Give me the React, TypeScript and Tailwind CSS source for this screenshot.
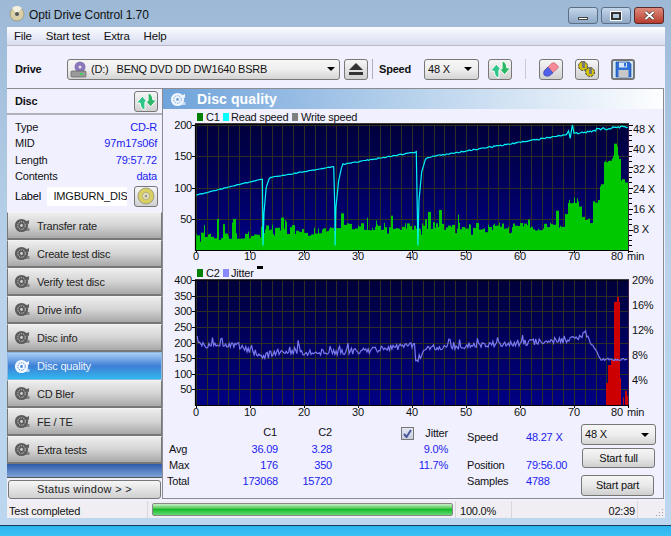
import React from "react";

const FONT = '"Liberation Sans", Arial, sans-serif';

function rng(seed: number) {
  let s = seed;
  return () => {
    s = (s * 16807) % 2147483647;
    return s / 2147483647;
  };
}

const X0 = 196;
const PX = 5.4;
const x = (m: number) => X0 + m * PX;
const GRID = "#2e2e26";

function Arrows({ size = 21 }: { size?: number }) {
  return (
    <svg width={size} height={size} viewBox="0 0 20 20">
      <path d="M0.5 11.5 L6 5 L11 10.5 H8.5 V18 Q4.5 17.5 4 12 V11.5 Z" fill="#2fc48a" stroke="#fff" strokeWidth="0.9" />
      <path d="M19.5 8.5 L14 15 L9 9.5 H11.5 V2 Q15.5 2.5 16 8 V8.5 Z" fill="#2cb866" stroke="#fff" strokeWidth="0.9" />
    </svg>
  );
}

function DiscIcon({ color = "#5f5f5f", hole = "#d8d8d8" }: { color?: string; hole?: string }) {
  return (
    <svg width="17" height="17" viewBox="0 0 17 17">
      <circle cx="7.5" cy="8.5" r="6.6" fill={color} />
      <circle cx="7.5" cy="8.5" r="3.8" fill="none" stroke={hole} strokeWidth="1" strokeDasharray="1.4 1" />
      <circle cx="7.5" cy="8.5" r="1.4" fill={hole} />
      <path d="M11 5 L15 3 V7 Z" fill={color} />
      <path d="M12 11 h3.5 v3 h-3.5 z" fill={color} opacity="0.65" />
    </svg>
  );
}

function Chart1() {
  const r = rng(4711);
  const H = 126;
  const yv = (v: number) => 250 - (v / 200) * H + 0.5;
  const env = (m: number) => {
    if (m < 12) return 24;
    if (m < 26) return 31;
    if (m < 42) return 38;
    if (m < 68) return 38;
    if (m < 69) return 44 + (m - 68) * 35;
    if (m < 70.5) return 80;
    if (m < 72) return 80 - (m - 70.5) * 22;
    if (m < 73.5) return 46;
    if (m < 74.8) return 80;
    if (m < 75.4) return 95 + (m - 74.8) * 45;
    if (m < 77.4) return 145;
    if (m < 78) return 168;
    if (m < 78.7) return 150;
    return 108;
  };
  const bars: string[] = [];
  let v = 0;
  let hold = 0;
  for (let px = 0; px < 432; px++) {
    const m = px / PX;
    if (hold <= 0) {
      hold = 1 + Math.floor(r() * 3);
      v = env(m) + (r() - 0.5) * 12;
      if (m < 68 && r() > 0.85) v += 8 + 14 * r();
      if (m < 68 && r() > 0.85) v -= 12 * r();
      if (Math.abs(m - 3.8) < 0.15 || Math.abs(m - 6.9) < 0.15) v = 50;
    }
    hold--;
    bars.push(`M${X0 + px + 0.5} 250V${yv(Math.max(4, v)).toFixed(1)}`);
  }
  const speed: [number, number][] = [];
  const seg = (a: number, b: number, va: number, vb: number, n: number) => {
    for (let i = 0; i <= (b - a) * 4; i++) {
      const t = i / ((b - a) * 4);
      speed.push([a + (b - a) * t, va + (vb - va) * t + (r() - 0.5) * n]);
    }
  };
  seg(0, 12, 88, 113, 1.2);
  speed.push([12.3, 113], [12.4, 8], [12.6, 60], [13, 100], [13.5, 113]);
  seg(13.8, 25.4, 116, 133, 1.2);
  speed.push([25.5, 133], [25.7, 68], [25.75, 8], [25.9, 68], [26.4, 110], [26.9, 130]);
  seg(27.2, 40.6, 137, 156, 1.5);
  speed.push([40.8, 157], [40.95, 80], [41.1, 8], [41.3, 80], [41.8, 125], [42.5, 145]);
  seg(42.9, 68, 148, 183, 2);
  speed.push([68.6, 184], [69, 190], [69.3, 178], [69.7, 200], [70, 186]);
  seg(70.5, 74, 186, 190, 2.5);
  seg(74.2, 80, 192, 197, 4);
  const vLines: number[] = [];
  for (let m = 0; m <= 80; m += 2) vLines.push(m);
  const xTicks = [0, 10, 20, 30, 40, 50, 60, 70, 80];
  const left = [200, 150, 100, 50];
  const right = ["48 X", "40 X", "32 X", "24 X", "16 X", "8 X"];
  const rightTicks: number[] = [];
  for (let i = 0; i <= 24; i++) rightTicks.push(124.5 + i * 5.25);
  return (
    <g>
      <rect x={195} y={124} width={434} height={126} fill="url(#plot1)" />
      {vLines.map((m) => (
        <path key={m} d={`M${Math.round(x(m)) + 0.5} 124V250`} stroke={GRID} strokeWidth="1" />
      ))}
      {left.map((val) => (
        <path key={val} d={`M195 ${Math.round(yv(val)) + 0.5}H628`} stroke={GRID} strokeWidth="1" />
      ))}
      <path d={bars.join("")} stroke="#00c800" strokeWidth="1" fill="none" />
      <path
        d={"M" + speed.map(([a, b]) => `${x(a).toFixed(1)} ${yv(b).toFixed(1)}`).join("L")}
        stroke="#00f4f4"
        strokeWidth="1.2"
        fill="none"
      />
      <path d="M195.5 124V250.5H628.5" stroke="#000" fill="none" strokeWidth="1.2" />
      <path d="M195 124H629" stroke="#000" strokeWidth="1.4" />
      <path d="M628.5 124V250" stroke="#3b1a4a" strokeWidth="1" />
      {rightTicks.map((t, i) => (
        <path key={i} d={`M629 ${Math.round(t) + 0.5}h${i % 4 === 0 ? 4 : 3}`} stroke="#000" />
      ))}
      {xTicks.map((m) => (
        <path key={m} d={`M${Math.round(x(m)) + 0.5} 250v3`} stroke="#000" />
      ))}
      {left.map((val) => (
        <path key={val} d={`M192 ${Math.round(yv(val)) + 0.5}h3`} stroke="#000" />
      ))}
      {left.map((val) => (
        <text key={val} x={192} y={yv(val) + 4} textAnchor="end" fontSize="11" fill="#111">
          {val}
        </text>
      ))}
      {right.map((t, i) => (
        <text key={t} x={633} y={133 + i * 20} fontSize="11" fill="#111">
          {t}
        </text>
      ))}
      {xTicks.map((m) => (
        <text key={m} x={m === 80 ? x(m) - 11 : x(m)} y={260} textAnchor="middle" fontSize="11" fill="#111">
          {m}
        </text>
      ))}
      <text x={627} y={260} fontSize="11" fill="#111">
        min
      </text>
    </g>
  );
}

function Chart2() {
  const r = rng(9001);
  const yv = (v: number) => 405 - (v / 400) * 125;
  const pts: [number, number][] = [];
  const base = (m: number) => {
    if (m < 1) return 215 - m * 20;
    if (m < 8) return 192;
    if (m < 12.5) return 190 - (m - 8) * 8;
    if (m < 14) return 152 + (m - 12.5) * 9;
    if (m < 30) return 166 + (m - 14) * 0.4;
    if (m < 40.6) return 172 + (m - 30) * 1.8;
    if (m < 41.2) return 135;
    if (m < 43) return 150 + (m - 41.2) * 17;
    if (m < 70) return 182 + (m - 43) * 1;
    if (m < 72) return 209 + (m - 70) * 10;
    if (m < 75) return 228 - (m - 72) * 27;
    return 146;
  };
  for (let m = 0.2; m < 80; m += 0.22) {
    let val = base(m) + (r() - 0.5) * 20;
    if (m < 74 && r() > 0.92) val += 18;
    if (Math.abs(m - 18.9) < 0.12) val = 207;
    if (m > 73) val = base(m) + (r() - 0.5) * 7;
    pts.push([m, val]);
  }
  const red: [number, number][] = [
    [75.7, 0],
    [76.1, 70],
    [76.7, 128],
    [77.2, 144],
    [77.9, 330],
    [78.2, 346],
    [78.4, 330],
    [78.6, 85],
    [79, 0],
    [79.2, 25],
    [79.4, 0],
    [79.6, 45],
    [79.9, 30],
    [81, 0],
  ];
  const redBars: string[] = [];
  for (let px = 0; px < 26; px++) {
    const m = 75.7 + px / PX;
    let val = 0;
    for (let i = 0; i < red.length; i++)
      if (m <= red[i][0]) {
        val = red[i][1];
        break;
      }
    if (val > 0) redBars.push(`M${Math.round(x(m)) + 0.5} 405V${yv(val).toFixed(1)}`);
  }
  const vLines: number[] = [];
  for (let m = 0; m <= 80; m += 2) vLines.push(m);
  const hs = [50, 100, 150, 200, 250, 300, 350];
  const xTicks = [0, 10, 20, 30, 40, 50, 60, 70, 80];
  const labels = [400, 350, 300, 250, 200, 150, 100, 50];
  const right: [string, number][] = [
    ["20%", 284],
    ["16%", 309],
    ["12%", 334],
    ["8%", 359],
    ["4%", 384],
  ];
  return (
    <g>
      <rect x={195} y={280} width={434} height={125} fill="url(#plot1)" />
      {vLines.map((m) => (
        <path key={m} d={`M${Math.round(x(m)) + 0.5} 280V405`} stroke={GRID} />
      ))}
      {hs.map((val) => (
        <path key={val} d={`M195 ${Math.round(yv(val)) + 0.5}H628`} stroke={GRID} />
      ))}
      <path d={redBars.join("")} stroke="#cc0000" fill="none" />
      <path
        d={"M" + pts.map(([a, b]) => `${x(a).toFixed(1)} ${yv(b).toFixed(1)}`).join("L")}
        stroke="#7a7af0"
        strokeWidth="1.2"
        fill="none"
      />
      <path d="M195.5 280V405.5H628.5" stroke="#000" fill="none" strokeWidth="1.2" />
      <path d="M195 280H629" stroke="#000" strokeWidth="1.4" />
      <path d="M628.5 280V405" stroke="#3b1a4a" />
      {xTicks.map((m) => (
        <path key={m} d={`M${Math.round(x(m)) + 0.5} 405v3`} stroke="#000" />
      ))}
      {labels.map((val) => (
        <path key={val} d={`M192 ${Math.round(yv(val)) + 0.5}h3`} stroke="#000" />
      ))}
      {labels.map((val) => (
        <text key={val} x={192} y={yv(val) + 4} textAnchor="end" fontSize="11" fill="#111">
          {val}
        </text>
      ))}
      {right.map(([t, yy]) => (
        <text key={t} x={632} y={yy} fontSize="11" fill="#111">
          {t}
        </text>
      ))}
      {xTicks.map((m) => (
        <text key={m} x={m === 80 ? x(m) - 11 : x(m)} y={416} textAnchor="middle" fontSize="11" fill="#111">
          {m}
        </text>
      ))}
      <text x={627} y={416} fontSize="11" fill="#111">
        min
      </text>
    </g>
  );
}

function Charts() {
  return (
    <svg
      width={500}
      height={311}
      viewBox="163 109 500 311"
      className="block shrink-0"
      style={{ fontFamily: FONT, letterSpacing: "-0.2px" }}
    >
      <defs>
        <linearGradient id="plot1" x1="0" y1="0" x2="0" y2="1">
          <stop offset="0" stopColor="#00003a" />
          <stop offset="1" stopColor="#000084" />
        </linearGradient>
      </defs>
      <rect x={197} y={113} width={6} height={8} fill="#008000" />
      <text x={206} y={121} fontSize="11" fill="#111">C1</text>
      <rect x={223} y={113} width={6} height={8} fill="#00ffff" />
      <text x={231} y={121} fontSize="11" fill="#111">Read speed</text>
      <rect x={292} y={113} width={6} height={8} fill="#808080" />
      <text x={301} y={121} fontSize="11" fill="#111">Write speed</text>
      <Chart1 />
      <rect x={197} y={269} width={6} height={8} fill="#008000" />
      <text x={206} y={277} fontSize="11" fill="#111">C2</text>
      <rect x={223} y={269} width={6} height={8} fill="#8888ff" />
      <text x={231} y={277} fontSize="11" fill="#111">Jitter</text>
      <rect x={257} y={266} width={6} height={3} fill="#000" />
      <Chart2 />
    </svg>
  );
}

function NavBtn({ label, active }: { label: string; active?: boolean }) {
  return (
    <div
      className={
        active
          ? "h-[28px] flex items-center pl-[6px] border-y border-x border-[#8fb8e0] bg-gradient-to-b from-[#a9cdf4] via-[#3d7fd6] to-[#2fb8ee] text-[#eef4ff]"
          : "h-[28px] flex items-center pl-[6px] border-x border-x-[#777] border-t border-t-[#f4f4f4] border-b-2 border-b-[#777] bg-gradient-to-b from-[#eeeeee] via-[#d4d4d4] to-[#a8a8a8] text-[#222]"
      }
    >
      <DiscIcon color={active ? "#f4f8ff" : "#5c5c5c"} hole={active ? "#4c88d8" : "#d0d0d0"} />
      <span className={active ? "ml-[6px] text-[11px]" : "ml-[6px] pt-[1px] text-[11px]"}>{label}</span>
    </div>
  );
}

function Row({ k, v }: { k: string; v: string }) {
  return (
    <div className="h-[16.4px] flex items-center justify-between text-[11px]">
      <span className="text-[#111]">{k}</span>
      <span className="text-[#1c1cf0]">{v}</span>
    </div>
  );
}

function ToolBtn({ children, cls = "" }: { children: React.ReactNode; cls?: string }) {
  return (
    <div
      className={
        "w-[24px] h-[21px] shrink-0 rounded-[3px] border border-[#777] bg-gradient-to-b from-[#f6f6f6] to-[#d0d0d0] flex items-center justify-center " +
        cls
      }
    >
      {children}
    </div>
  );
}

function Combo({ w, text, cls = "" }: { w: string; text: string; cls?: string }) {
  return (
    <div
      className={
        w +
        " h-[21px] shrink-0 rounded-[3px] border border-[#777] bg-gradient-to-b from-[#f6f6f6] via-[#eeeeee] to-[#d4d4d4] flex items-center justify-between pl-[3px] pr-[6px] text-[11px] text-[#111] " +
        cls
      }
    >
      <span>{text}</span>
      <span className="w-0 h-0 border-x-[4px] border-x-transparent border-t-[4px] border-t-black" />
    </div>
  );
}

function Btn({ label, cls }: { label: string; cls: string }) {
  return (
    <div
      className={
        cls +
        " w-[73px] rounded-[3px] border border-[#777] bg-gradient-to-b from-[#f6f6f6] via-[#e8e8e8] to-[#cfcfcf] flex items-center justify-center text-[11px] text-[#111]"
      }
    >
      {label}
    </div>
  );
}

export default function App() {
  return (
    <div
      className="w-[671px] h-[536px] overflow-hidden flex flex-col text-[11px] tracking-[-0.2px]"
      style={{ fontFamily: FONT }}
    >
      <div className="h-[526px] shrink-0 flex flex-col bg-gradient-to-b from-[#9db9d6] via-[#b9d2ea] to-[#bcd6f0] border-b border-[#1a3a55]">
        {/* title */}
        <div className="h-[27px] flex items-center pl-[9px] pr-[7px] shrink-0">
          <svg width="16" height="16" viewBox="0 0 16 16">
            <circle cx="8" cy="8" r="7" fill="#d8cfa8" stroke="#8a8064" strokeWidth="0.6" />
            <path d="M8 8 L3 2 A7 7 0 0 1 13 2 Z" fill="#f4f0e0" />
            <circle cx="8" cy="8" r="2" fill="#555" />
          </svg>
          <span className="ml-[4px] pt-[2px] text-[12px] tracking-[-0.1px] text-[#111]">Opti Drive Control 1.70</span>
          <div className="ml-auto flex items-start gap-[3px] mt-[4px]">
            <div className="w-[30px] h-[17px] rounded-[3px] border border-[#5c6f85] bg-gradient-to-b from-[#c4d6ea] to-[#8fa9c6] flex items-end justify-center pb-[3px]">
              <div className="w-[10px] h-[3px] bg-white border border-[#444]" />
            </div>
            <div className="w-[30px] h-[17px] rounded-[3px] border border-[#5c6f85] bg-gradient-to-b from-[#c4d6ea] to-[#8fa9c6] flex items-center justify-center">
              <div className="w-[10px] h-[8px] bg-[#b8cce0] border-2 border-[#333] outline outline-1 outline-white" />
            </div>
            <div className="w-[30px] h-[17px] rounded-[3px] border border-[#5a2a2a] bg-gradient-to-b from-[#dc8a7c] to-[#b83a2c] flex items-center justify-center">
              <svg width="11" height="9" viewBox="0 0 11 9">
                <path d="M1.5 1 L9.5 8 M9.5 1 L1.5 8" stroke="#333" strokeWidth="3.2" />
                <path d="M1.5 1 L9.5 8 M9.5 1 L1.5 8" stroke="#fff" strokeWidth="2" />
              </svg>
            </div>
          </div>
        </div>

        {/* window body */}
        <div className="flex-1 ml-[7px] mr-[6px] flex flex-col min-h-0 bg-[#f0f0ff]">
          <div className="h-[19px] shrink-0 flex items-center gap-[14px] pl-[7px] pt-[2px] bg-gradient-to-b from-[#fbfcff] via-[#e9ecf8] to-[#d8dcee] border-b border-[#b8bcc8] text-[11.5px] text-[#111]">
            <span>File</span>
            <span>Start test</span>
            <span>Extra</span>
            <span>Help</span>
          </div>

          {/* toolbar */}
          <div className="h-[42px] shrink-0 flex items-center pt-[4px]">
            <span className="ml-[8px] w-[27px] font-bold text-[11px] text-[#111]">Drive</span>
            <div className="ml-[25px] w-[273px] h-[21px] shrink-0 rounded-[3px] border border-[#777] bg-gradient-to-b from-[#f6f6f6] via-[#eeeeee] to-[#d4d4d4] flex items-center pl-[2px] pr-[4px]">
              <svg width="18" height="17" viewBox="0 0 18 17">
                <circle cx="10" cy="6" r="5.5" fill="#8a78b8" />
                <circle cx="10" cy="6" r="1.5" fill="#e8e0f4" />
                <rect x="1" y="10" width="15" height="6" rx="1" fill="#9a9a9a" stroke="#555" strokeWidth="0.6" />
                <rect x="10" y="12" width="3" height="2" fill="#3fd060" />
              </svg>
              <span className="ml-[3px] text-[11px] text-[#111]">(D:)</span>
              <span className="ml-[8px] text-[11px] text-[#111]">BENQ DVD DD DW1640 BSRB</span>
              <span className="ml-auto w-0 h-0 border-x-[4px] border-x-transparent border-t-[4px] border-t-black" />
            </div>
            <ToolBtn cls="ml-[4px]">
              <svg width="16" height="14" viewBox="0 0 16 14">
                <path d="M8 1 L15 8 H1 Z" fill="#333" />
                <rect x="1" y="10" width="14" height="3" fill="#333" />
              </svg>
            </ToolBtn>
            <div className="ml-[4px] w-px h-[20px] bg-[#b0b0b8]" />
            <span className="ml-[6px] w-[31px] font-bold text-[11px] text-[#111]">Speed</span>
            <Combo w="w-[55px] ml-[14px]" text="48 X" />
            <ToolBtn cls="ml-[9px]">
              <Arrows />
            </ToolBtn>
            <div className="ml-[13px] w-px h-[20px] bg-[#c8c8d0]" />
            <ToolBtn cls="ml-[13px]">
              <svg width="18" height="18" viewBox="0 0 18 18">
                <path d="M2 11 L10 3 Q12 2 14 4 L16 6 Q17 8 15 9 L7 16 Z" fill="#f88a98" stroke="#b85060" strokeWidth="0.5" />
                <path d="M2 11 L6 7 L11 13 L7 16 Q4 17 2 15 Q1 13 2 11 Z" fill="#5060e8" stroke="#3040a8" strokeWidth="0.5" />
              </svg>
            </ToolBtn>
            <ToolBtn cls="ml-[12px]">
              <svg width="20" height="18" viewBox="0 0 20 18">
                <circle cx="6" cy="6" r="4.5" fill="#d4c400" stroke="#444" strokeWidth="1" strokeDasharray="2.5 1" />
                <circle cx="13" cy="12" r="4.5" fill="#d4c400" stroke="#444" strokeWidth="1" strokeDasharray="2.5 1" />
                <rect x="5" y="1" width="3" height="7" fill="#777" />
                <rect x="12" y="7" width="3" height="7" fill="#777" />
              </svg>
            </ToolBtn>
            <ToolBtn cls="ml-[12px] border-[#1c9fe0] border-2 bg-none bg-[#cfe6f6]">
              <svg width="17" height="17" viewBox="0 0 17 17">
                <path d="M1 1 H14 L16 3 V16 H1 Z" fill="#2f6fd8" stroke="#1b3f88" strokeWidth="0.6" />
                <rect x="4" y="1.5" width="8" height="5" fill="#d8e8f8" />
                <rect x="9" y="2" width="2" height="3.5" fill="#2f6fd8" />
                <rect x="3.5" y="9" width="10" height="7" fill="#c8c8c8" />
              </svg>
            </ToolBtn>
          </div>

          {/* main */}
          <div className="flex-1 flex min-h-0 pr-[1px]">
            {/* sidebar */}
            <div className="w-[155px] shrink-0 flex flex-col">
              <div className="h-[124px] shrink-0 border-t border-[#8c8c90] flex flex-col">
                <div className="h-[26px] shrink-0 flex items-center justify-between pl-[8px] pr-[4px] border-b-2 border-[#b0b0b8]">
                  <span className="font-bold text-[11px] text-[#111]">Disc</span>
                  <ToolBtn>
                    <Arrows />
                  </ToolBtn>
                </div>
                <div className="pl-[8px] pr-[5px] pt-[4px]">
                  <Row k="Type" v="CD-R" />
                  <Row k="MID" v="97m17s06f" />
                  <Row k="Length" v="79:57.72" />
                  <Row k="Contents" v="data" />
                  <div className="mt-[1px] flex items-center justify-between -mr-[1px]">
                    <span>Label</span>
                    <div className="ml-[5px] w-[80px] h-[19px] bg-white flex items-center pl-[6px] text-[11px] overflow-hidden whitespace-nowrap text-[#111]">
                      IMGBURN_DIS
                    </div>
                    <ToolBtn cls="ml-[5px]">
                      <svg width="18" height="18" viewBox="0 0 18 18">
                        <circle cx="9" cy="9" r="8" fill="#d8d060" stroke="#777" strokeWidth="0.6" />
                        <circle cx="9" cy="9" r="3.5" fill="#f0ecc0" stroke="#888" strokeWidth="0.6" />
                        <circle cx="9" cy="9" r="1.5" fill="#999" />
                      </svg>
                    </ToolBtn>
                  </div>
                </div>
              </div>
              <div className="flex flex-col">
                {["Transfer rate", "Create test disc", "Verify test disc", "Drive info", "Disc info"].map((l) => (
                  <NavBtn key={l} label={l} />
                ))}
                <NavBtn label="Disc quality" active />
                {["CD Bler", "FE / TE", "Extra tests"].map((l) => (
                  <NavBtn key={l} label={l} />
                ))}
              </div>
              <div className="h-[14px] shrink-0 bg-gradient-to-b from-[#2f5aa8] to-[#7ea4d8] border-b border-[#555]" />
              <div className="mt-[2px] mx-[1px] h-[19px] shrink-0 rounded-[3px] border border-[#777] bg-gradient-to-b from-[#f6f6f6] to-[#d0d0d0] flex items-center justify-center text-[11px] tracking-[0.3px] text-[#222]">
                Status window &gt; &gt;
              </div>
            </div>

            {/* right */}
            <div className="flex-1 min-w-0 mb-[1px] border border-[#8c8c90] flex flex-col">
              <div className="h-[20px] shrink-0 flex items-center pl-[7px] bg-gradient-to-r from-[#6fa3da] via-[#b8d2ec] to-[#fdfeff]">
                <DiscIcon color="#f0f6ff" hole="#6fa3da" />
                <span className="ml-[10px] font-bold text-[14px] tracking-[0.1px] text-white">Disc quality</span>
              </div>
              <Charts />
              <div className="relative flex-1 min-h-0">
                <div className="absolute left-[4px] top-[4px] text-[11px] grid grid-cols-[40px_71px_54px] leading-[16px]">
                  <span className="h-[17px]" />
                  <span className="text-right pr-[1px] text-[#111]">C1</span>
                  <span className="text-right text-[#111]">C2</span>
                  <span className="pl-[2px] text-[#111]">Avg</span>
                  <span className="text-right text-[#1c1cf0]">36.09</span>
                  <span className="text-right text-[#1c1cf0]">3.28</span>
                  <span className="pl-[2px] text-[#111]">Max</span>
                  <span className="text-right text-[#1c1cf0]">176</span>
                  <span className="text-right text-[#1c1cf0]">350</span>
                  <span className="text-[#111]">Total</span>
                  <span className="text-right text-[#1c1cf0]">173068</span>
                  <span className="text-right text-[#1c1cf0]">15720</span>
                </div>
                <div className="absolute left-[238px] top-[5px] w-[47px] text-[11px] leading-[16px] text-right">
                  <div className="flex items-center justify-between text-[#111]">
                    <span className="w-[13px] h-[13px] border border-[#777] bg-gradient-to-b from-[#e4e8f4] to-[#c8cce0] flex items-center justify-center">
                      <svg width="9" height="9" viewBox="0 0 9 9">
                        <path d="M1 5 L3.5 8 L8 1" stroke="#4a5a98" strokeWidth="2" fill="none" />
                      </svg>
                    </span>
                    <span>Jitter</span>
                  </div>
                  <div className="text-[#1c1cf0]">9.0%</div>
                  <div className="text-[#1c1cf0]">11.7%</div>
                </div>
                <div className="absolute left-[304px] top-[9px] text-[11px] leading-[16px] grid grid-cols-[59px_auto]">
                  <span className="text-[#111]">Speed</span>
                  <span className="text-[#1c1cf0]">48.27 X</span>
                  <span className="h-[12px] col-span-2" />
                  <span className="text-[#111]">Position</span>
                  <span className="text-[#1c1cf0]">79:56.00</span>
                  <span className="text-[#111]">Samples</span>
                  <span className="text-[#1c1cf0]">4788</span>
                </div>
                <div className="absolute left-[418px] top-[4px] flex flex-col items-start">
                  <Combo w="w-[75px]" text="48 X" />
                  <Btn label="Start full" cls="mt-[3px] ml-[1px] h-[20px]" />
                  <Btn label="Start part" cls="mt-[7px] h-[21px]" />
                </div>
              </div>
            </div>
          </div>

          {/* status */}
          <div className="h-[17px] mt-[1px] shrink-0 flex items-center bg-[#f0eef2] text-[11px] text-[#111]">
            <span className="w-[140px] pl-[2px] pt-[3px]">Test completed</span>
            <div className="w-px h-full bg-[#d8d8dc]" />
            <div className="ml-[4px] w-[301px] h-[13px] border border-[#888] rounded-[2px] bg-gradient-to-b from-[#c8f0c8] via-[#10bc2c] to-[#60d870]" />
            <div className="ml-[2px] w-px h-full bg-[#d8d8dc]" />
            <span className="ml-[4px] w-[51px] pt-[3px]">100.0%</span>
            <div className="w-px h-full bg-[#d8d8dc]" />
            <span className="w-[123px] pt-[3px] text-right">02:39</span>
            <div className="ml-[2px] w-px h-full bg-[#d8d8dc]" />
            <svg className="ml-auto self-end mb-[1px] mr-[1px]" width="9" height="9" viewBox="0 0 9 9">
              <path d="M7 1h1v1H7zM4 4h1v1H4zM7 4h1v1H7zM1 7h1v1H1zM4 7h1v1H4zM7 7h1v1H7z" fill="#a0a0a4" />
            </svg>
          </div>
          <div className="h-[7px] shrink-0 -mx-[7px] bg-[#bcd6f0]" />
        </div>
      </div>
      <div className="flex-1 bg-gradient-to-b from-[#2db4ee] to-[#3cc0f4]" />
    </div>
  );
}
